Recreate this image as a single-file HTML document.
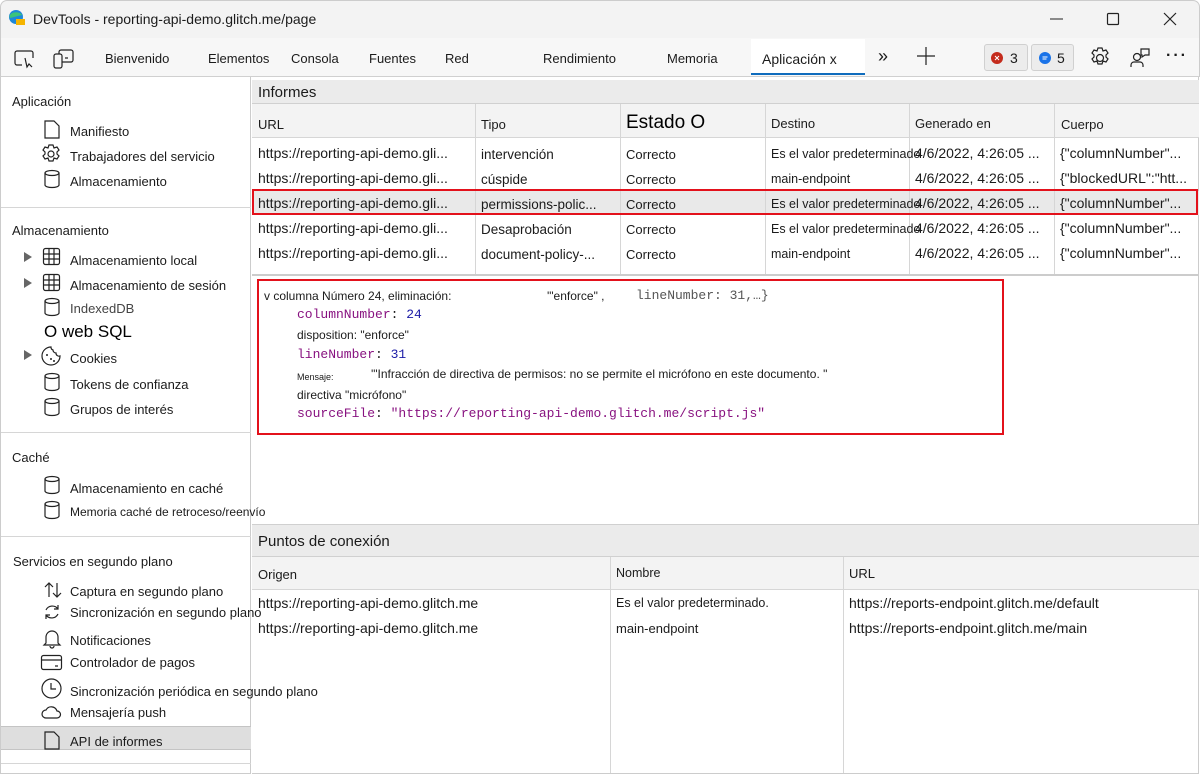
<!DOCTYPE html>
<html><head><meta charset="utf-8"><style>
*{margin:0;padding:0;box-sizing:border-box}
body{width:1200px;height:774px;overflow:hidden;background:#fff;font-family:"Liberation Sans",sans-serif;font-size:13px;color:#1b1b1b;position:relative}
.a{position:absolute;white-space:nowrap}
.m{font-family:"Liberation Mono",monospace}
.vl{position:absolute;width:1px;background:#d6d6d6}
.hl{position:absolute;height:1px;background:#d6d6d6}
svg{position:absolute;overflow:visible}
.ic{fill:none;stroke:#222;stroke-width:1.2}
</style></head><body>
<div class="a" style="left:0;top:0;width:1200px;height:38px;background:#f3f3f3;border:1px solid #ccc;border-bottom:none;border-radius:7px 7px 0 0"></div>
<svg style="left:8px;top:9px" width="16" height="16"><circle cx="8" cy="8" r="7" fill="#1e88d8"/><path d="M2 9a6 4 0 0 1 12 -3" fill="#3bc47a"/><rect x="8" y="10" width="9" height="6" fill="#f5b400"/></svg>
<div class="a" style="left:33px;top:11px;font-size:14px">DevTools - reporting-api-demo.glitch.me/page</div>
<svg style="left:1050px;top:18px" width="14" height="2"><path d="M0 1h13" stroke="#222"/></svg>
<svg style="left:1107px;top:13px" width="12" height="12"><rect x=".5" y=".5" width="11" height="11" class="ic" rx="1"/></svg>
<svg style="left:1164px;top:13px" width="12" height="12"><path d="M0 0L12 12M12 0L0 12" class="ic"/></svg>
<div class="a" style="left:0;top:38px;width:1200px;height:39px;background:#f7f7f7;border-bottom:1px solid #d0d0d0;border-left:1px solid #ccc;border-right:1px solid #ccc"></div>
<svg style="left:14px;top:50px" width="22" height="18"><path d="M8 15H3a2 2 0 0 1-2-2V3a2 2 0 0 1 2-2h14a2 2 0 0 1 2 2v5" class="ic"/><path d="M11 8l2 9 2-3 3 3" class="ic"/></svg>
<svg style="left:53px;top:49px" width="22" height="20"><rect x="1" y="5" width="8" height="14" rx="2" class="ic"/><path d="M6 5V3a2 2 0 0 1 2-2h10a2 2 0 0 1 2 2v8a2 2 0 0 1-2 2H9M12 9h3" class="ic"/></svg>
<div class="a" style="left:105px;top:51px">Bienvenido</div>
<div class="a" style="left:208px;top:51px">Elementos</div>
<div class="a" style="left:291px;top:51px">Consola</div>
<div class="a" style="left:369px;top:51px">Fuentes</div>
<div class="a" style="left:445px;top:51px">Red</div>
<div class="a" style="left:543px;top:51px">Rendimiento</div>
<div class="a" style="left:667px;top:51px">Memoria</div>
<div class="a" style="left:751px;top:39px;width:114px;height:36px;background:#fff;border-bottom:2px solid #0f6cbd"></div>
<div class="a" style="left:762px;top:51px;font-size:14px">Aplicación x</div>
<div class="a" style="left:878px;top:46px;font-size:18px">»</div>
<svg style="left:917px;top:47px" width="18" height="18"><path d="M9 0v18M0 9h18" class="ic"/></svg>
<div class="a" style="left:984px;top:44px;width:44px;height:27px;background:#ececec;border:1px solid #d0d0d0;border-radius:3px"></div>
<svg style="left:991px;top:52px" width="12" height="12"><circle cx="6" cy="6" r="6" fill="#c42b1c"/><path d="M4 4l4 4M8 4l-4 4" stroke="#fff"/></svg>
<div class="a" style="left:1010px;top:50px;font-size:14px">3</div>
<div class="a" style="left:1031px;top:44px;width:43px;height:27px;background:#ececec;border:1px solid #d0d0d0;border-radius:3px"></div>
<svg style="left:1039px;top:52px" width="12" height="12"><circle cx="6" cy="6" r="6" fill="#1a73e8"/><path d="M3.5 5h5M3.5 7h4" stroke="#fff"/></svg>
<div class="a" style="left:1057px;top:50px;font-size:14px">5</div>
<svg style="left:1089px;top:47px" width="22" height="22"><circle cx="11" cy="11" r="3.5" class="ic"/><path d="M9 1h4l1 3 3-1 2 3-2 2 0 2 2 2-2 3-3-1-1 3H9l-1-3-3 1-2-3 2-2 0-2-2-2 2-3 3 1z" class="ic"/></svg>
<svg style="left:1129px;top:47px" width="22" height="22"><circle cx="8" cy="10" r="3.5" class="ic"/><path d="M2 20v-2a3 3 0 0 1 3-3h6a3 3 0 0 1 3 3v2M12 2h8v6h-4l-3 2V8h-1z" class="ic"/></svg>
<div class="a" style="left:1166px;top:47px;font-size:16px;letter-spacing:2px;font-weight:bold">···</div>
<div class="a" style="left:0;top:77px;width:251px;height:697px;border-left:1px solid #ccc;border-right:1px solid #ccc;border-bottom:1px solid #ccc"></div>
<div class="hl" style="left:1px;top:207px;width:250px"></div>
<div class="hl" style="left:1px;top:432px;width:250px"></div>
<div class="hl" style="left:1px;top:536px;width:250px"></div>
<div class="a" style="left:1px;top:726px;width:250px;height:24px;background:#dedede;border-top:1px solid #c4c4c4;border-bottom:1px solid #c4c4c4"></div>
<div class="hl" style="left:1px;top:763px;width:250px"></div>
<div class="a" style="left:12px;top:94px">Aplicación</div>
<div class="a" style="left:70px;top:124px">Manifiesto</div>
<div class="a" style="left:70px;top:149px">Trabajadores del servicio</div>
<div class="a" style="left:70px;top:174px">Almacenamiento</div>
<div class="a" style="left:12px;top:223px">Almacenamiento</div>
<div class="a" style="left:70px;top:253px">Almacenamiento local</div>
<div class="a" style="left:70px;top:278px">Almacenamiento de sesión</div>
<div class="a" style="left:70px;top:301px;color:#444">IndexedDB</div>
<div class="a" style="left:44px;top:322px;font-size:17px;color:#000">O web SQL</div>
<div class="a" style="left:70px;top:351px">Cookies</div>
<div class="a" style="left:70px;top:377px">Tokens de confianza</div>
<div class="a" style="left:70px;top:402px">Grupos de interés</div>
<div class="a" style="left:12px;top:450px">Caché</div>
<div class="a" style="left:70px;top:481px">Almacenamiento en caché</div>
<div class="a" style="left:70px;top:505px;font-size:12px">Memoria caché de retroceso/reenvío</div>
<div class="a" style="left:13px;top:554px">Servicios en segundo plano</div>
<div class="a" style="left:70px;top:584px">Captura en segundo plano</div>
<div class="a" style="left:70px;top:605px">Sincronización en segundo plano</div>
<div class="a" style="left:70px;top:633px">Notificaciones</div>
<div class="a" style="left:70px;top:655px">Controlador de pagos</div>
<div class="a" style="left:70px;top:684px">Sincronización periódica en segundo plano</div>
<div class="a" style="left:70px;top:705px">Mensajería push</div>
<div class="a" style="left:70px;top:734px">API de informes</div>
<svg style="left:44px;top:120px" width="16" height="19"><path d="M1 1h9l5 5v12H1z" class="ic"/></svg>
<svg style="left:41px;top:144px" width="20" height="20"><circle cx="10" cy="10" r="3" class="ic"/><path d="M8 1h4l1 3 3-1 2 3-2 2v2l2 2-2 3-3-1-1 3H8l-1-3-3 1-2-3 2-2V8L2 6l2-3 3 1z" class="ic"/></svg>
<svg style="left:44px;top:170px" width="16" height="19"><ellipse cx="8" cy="3" rx="7" ry="2.5" class="ic"/><path d="M1 3v12a7 2.5 0 0 0 14 0V3" class="ic"/></svg>
<svg style="left:24px;top:252px" width="8" height="10"><path d="M0 0l8 5-8 5z" fill="#666"/></svg>
<svg style="left:43px;top:248px" width="17" height="17"><rect x=".5" y=".5" width="16" height="16" rx="2" class="ic"/><path d="M6 1v15M11 1v15M1 6h15M1 11h15" class="ic"/></svg>
<svg style="left:24px;top:278px" width="8" height="10"><path d="M0 0l8 5-8 5z" fill="#666"/></svg>
<svg style="left:43px;top:274px" width="17" height="17"><rect x=".5" y=".5" width="16" height="16" rx="2" class="ic"/><path d="M6 1v15M11 1v15M1 6h15M1 11h15" class="ic"/></svg>
<svg style="left:44px;top:298px" width="16" height="19"><ellipse cx="8" cy="3" rx="7" ry="2.5" class="ic"/><path d="M1 3v12a7 2.5 0 0 0 14 0V3" class="ic"/></svg>
<svg style="left:24px;top:350px" width="8" height="10"><path d="M0 0l8 5-8 5z" fill="#666"/></svg>
<svg style="left:41px;top:346px" width="20" height="20"><path d="M10 1a9 9 0 1 0 9 9 3 3 0 0 1-4-3 3 3 0 0 1-3-3 3 3 0 0 1-2-3z" class="ic"/><circle cx="6" cy="9" r="1" fill="#222"/><circle cx="10" cy="13" r="1" fill="#222"/><circle cx="13" cy="15" r="1" fill="#222"/></svg>
<svg style="left:44px;top:373px" width="16" height="19"><ellipse cx="8" cy="3" rx="7" ry="2.5" class="ic"/><path d="M1 3v12a7 2.5 0 0 0 14 0V3" class="ic"/></svg>
<svg style="left:44px;top:398px" width="16" height="19"><ellipse cx="8" cy="3" rx="7" ry="2.5" class="ic"/><path d="M1 3v12a7 2.5 0 0 0 14 0V3" class="ic"/></svg>
<svg style="left:44px;top:476px" width="16" height="19"><ellipse cx="8" cy="3" rx="7" ry="2.5" class="ic"/><path d="M1 3v12a7 2.5 0 0 0 14 0V3" class="ic"/></svg>
<svg style="left:44px;top:501px" width="16" height="19"><ellipse cx="8" cy="3" rx="7" ry="2.5" class="ic"/><path d="M1 3v12a7 2.5 0 0 0 14 0V3" class="ic"/></svg>
<svg style="left:44px;top:582px" width="18" height="16"><path d="M5 15V1M1 5l4-4 4 4M13 1v14M9 11l4 4 4-4" class="ic"/></svg>
<svg style="left:43px;top:603px" width="18" height="18"><path d="M15 6a7 7 0 0 0-12 1M3 12a7 7 0 0 0 12-1M15 2v4h-4M3 16v-4h4" class="ic"/></svg>
<svg style="left:43px;top:629px" width="18" height="19"><path d="M3 14V8a6 6 0 0 1 12 0v6l2 2H1zM7 17a2 2 0 0 0 4 0" class="ic"/></svg>
<svg style="left:41px;top:655px" width="21" height="16"><rect x=".5" y=".5" width="20" height="14" rx="2" class="ic"/><path d="M1 5h19M14 11h3" class="ic"/></svg>
<svg style="left:41px;top:678px" width="21" height="21"><circle cx="10.5" cy="10.5" r="9.5" class="ic"/><path d="M10 5v6h5" class="ic"/></svg>
<svg style="left:41px;top:704px" width="21" height="15"><path d="M5 14a4 4 0 0 1 0-8 6 6 0 0 1 11 1 3.5 3.5 0 0 1 0 7z" class="ic"/></svg>
<svg style="left:44px;top:731px" width="16" height="19"><path d="M1 1h9l5 5v12H1z" class="ic"/></svg>
<div class="a" style="left:252px;top:77px;width:947px;height:697px;border-right:1px solid #ccc;border-bottom:1px solid #ccc"></div>
<div class="a" style="left:252px;top:80px;width:947px;height:24px;background:#ebebeb;border-bottom:1px solid #d0d0d0"></div>
<div class="a" style="left:258px;top:84px;font-size:15px">Informes</div>
<div class="a" style="left:252px;top:104px;width:947px;height:34px;background:#f3f3f3;border-bottom:1px solid #d6d6d6"></div>
<div class="a" style="left:252px;top:191px;width:947px;height:24px;background:#e9e9e9"></div>
<div class="vl" style="left:475px;top:104px;height:170px"></div>
<div class="vl" style="left:620px;top:104px;height:170px"></div>
<div class="vl" style="left:765px;top:104px;height:170px"></div>
<div class="vl" style="left:909px;top:104px;height:170px"></div>
<div class="vl" style="left:1054px;top:104px;height:170px"></div>
<div class="hl" style="left:252px;top:274px;width:947px;background:#ccc;height:2px"></div>
<div class="a" style="left:258px;top:117px">URL</div>
<div class="a" style="left:481px;top:117px">Tipo</div>
<div class="a" style="left:626px;top:112px;font-size:19px;color:#000">Estado O</div>
<div class="a" style="left:771px;top:116px">Destino</div>
<div class="a" style="left:915px;top:116px">Generado en</div>
<div class="a" style="left:1061px;top:117px">Cuerpo</div>
<div style="position:absolute;left:258px;top:141px;line-height:25px;font-size:14px">https://reporting-api-demo.gli...<br>https://reporting-api-demo.gli...<br>https://reporting-api-demo.gli...<br>https://reporting-api-demo.gli...<br>https://reporting-api-demo.gli...</div>
<div style="position:absolute;left:481px;top:142px;line-height:25px;font-size:13.5px">intervención<br>cúspide<br>permissions-polic...<br>Desaprobación<br>document-policy-...</div>
<div style="position:absolute;left:626px;top:142px;line-height:25px">Correcto<br>Correcto<br>Correcto<br>Correcto<br>Correcto</div>
<div style="position:absolute;left:771px;top:142px;line-height:25px;font-size:12.5px;white-space:nowrap">Es el valor predeterminado<br>main-endpoint<br>Es el valor predeterminado<br>Es el valor predeterminado<br>main-endpoint</div>
<div style="position:absolute;left:915px;top:141px;line-height:25px;font-size:14px;white-space:nowrap;width:138px;overflow:hidden">4/6/2022, 4:26:05 ...<br>4/6/2022, 4:26:05 ...<br>4/6/2022, 4:26:05 ...<br>4/6/2022, 4:26:05 ...<br>4/6/2022, 4:26:05 ...</div>
<div style="position:absolute;left:1060px;top:141px;line-height:25px;font-size:14px;white-space:nowrap;width:138px;overflow:hidden">{"columnNumber"...<br>{"blockedURL":"htt...<br>{"columnNumber"...<br>{"columnNumber"...<br>{"columnNumber"...</div>
<div class="a" style="left:252px;top:189px;width:946px;height:26px;border:2px solid #e3111b"></div>
<div class="a" style="left:257px;top:279px;width:747px;height:156px;border:2px solid #e3111b"></div>
<div class="a" style="left:264px;top:289px;font-size:12px">v columna Número 24, eliminación:</div>
<div class="a" style="left:547px;top:289px;font-size:12px">'"enforce" ,</div>
<div class="a m" style="left:636px;top:288px;color:#555">lineNumber: 31,…}</div>
<div class="a m" style="left:297px;top:307px"><span style="color:#881280">columnNumber</span>: <span style="color:#1a1aa6">24</span></div>
<div class="a" style="left:297px;top:328px;font-size:12px">disposition: "enforce"</div>
<div class="a m" style="left:297px;top:347px"><span style="color:#881280">lineNumber</span>: <span style="color:#1a1aa6">31</span></div>
<div class="a" style="left:297px;top:372px;font-size:9px">Mensaje:</div>
<div class="a" style="left:371px;top:367px;font-size:12px">'"Infracción de directiva de permisos: no se permite el micrófono en este documento. "</div>
<div class="a" style="left:297px;top:388px;font-size:12px">directiva "micrófono"</div>
<div class="a m" style="left:297px;top:406px"><span style="color:#881280">sourceFile</span>: <span style="color:#881280">"https://reporting-api-demo.glitch.me/script.js"</span></div>
<div class="a" style="left:252px;top:524px;width:947px;height:33px;background:#ebebeb;border-top:1px solid #d0d0d0;border-bottom:1px solid #d0d0d0"></div>
<div class="a" style="left:258px;top:533px;font-size:15px">Puntos de conexión</div>
<div class="a" style="left:252px;top:557px;width:947px;height:33px;background:#f3f3f3;border-bottom:1px solid #d6d6d6"></div>
<div class="vl" style="left:610px;top:557px;height:216px"></div>
<div class="vl" style="left:843px;top:557px;height:216px"></div>
<div class="a" style="left:258px;top:567px">Origen</div>
<div class="a" style="left:616px;top:566px;font-size:12.5px">Nombre</div>
<div class="a" style="left:849px;top:566px">URL</div>
<div class="a" style="left:258px;top:595px;font-size:14px">https://reporting-api-demo.glitch.me</div>
<div class="a" style="left:258px;top:620px;font-size:14px">https://reporting-api-demo.glitch.me</div>
<div class="a" style="left:616px;top:596px;font-size:12.5px">Es el valor predeterminado.</div>
<div class="a" style="left:616px;top:621px">main-endpoint</div>
<div class="a" style="left:849px;top:595px;font-size:14px">https://reports-endpoint.glitch.me/default</div>
<div class="a" style="left:849px;top:620px;font-size:14px">https://reports-endpoint.glitch.me/main</div>
</body></html>
